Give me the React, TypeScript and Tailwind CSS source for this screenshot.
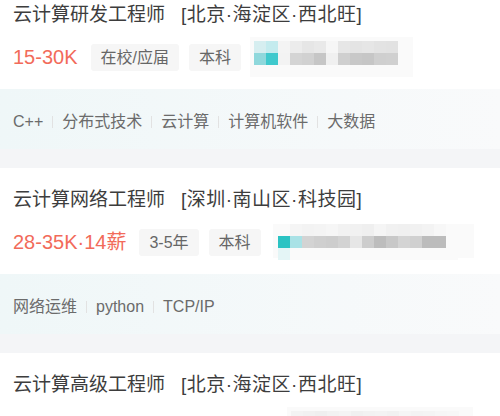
const FONT = "font-['Liberation_Sans','Noto_Sans_CJK_SC',sans-serif]";

interface Job {
  title: string;
  location: string;
  salary?: string;
  tags: string[];
  skills: string[];
  mosaic: string[][];
  mosaicClass: string;
}

const JOBS: Job[] = [
  {
    title: "云计算研发工程师",
    location: "[北京·海淀区·西北旺]",
    salary: "15-30K",
    tags: ["在校/应届", "本科"],
    skills: ["C++", "分布式技术", "云计算", "计算机软件", "大数据"],
    mosaicClass: "ml-[-1px] w-[163px] h-[40px] pt-[4px] pl-[4px]",
    mosaic: [
      ["#d6eef0", "#c4ebee", "#f4f4f4", "#ececec", "#e6e6e6", "#e9e9e9", "#f6f6f6", "#e6e6e6", "#e4e4e4", "#e6e6e6", "#e3e3e3", "#e2e2e2"],
      ["#8fd8dc", "#3fc9cd", "#f3f3f3", "#d4d4d4", "#d1d1d1", "#c6c6c6", "#f0f0f0", "#cfcfcf", "#c8c8c8", "#c6c6c6", "#cfcfcf", "#d0d0d0"],
    ],
  },
  {
    title: "云计算网络工程师",
    location: "[深圳·南山区·科技园]",
    salary: "28-35K·14薪",
    tags: ["3-5年", "本科"],
    skills: ["网络运维", "python", "TCP/IP"],
    mosaicClass: "ml-[2px] w-[201px] h-[34px] -mt-[3px] pl-[5px]",
    mosaic: [
      ["#fafafa", "#f5f5f5", "#f3f3f3", "#f4f4f4", "#f6f6f6", "#f2f2f2", "#f1f1f1", "#efefef", "#f5f5f5", "#f1f1f1", "#f0f0f0", "#f1f1f1", "#f3f3f3", "#f7f7f7", "#fafafa"],
      ["#2bc3c3", "#a9e2e6", "#d3d3d3", "#cfcfcf", "#cdcdcd", "#d3d3d3", "#e6e6e6", "#cdcdcd", "#bdbdbd", "#c8c8c8", "#d4d4d4", "#d0d0d0", "#bcbcbc", "#bcbcbc", "#fafafa"],
      ["#e4f5f6", "#fafafa", "#fafafa", "#fafafa", "#fafafa", "#fafafa", "#fafafa", "#fafafa", "#fafafa", "#fafafa", "#fafafa", "#fafafa", "#fafafa", "#fafafa", "#fafafa"],
    ],
  },
  {
    title: "云计算高级工程师",
    location: "[北京·海淀区·西北旺]",
    tags: [],
    skills: [],
    mosaicClass: "ml-[274px] w-[186px] h-[40px] pt-[4px] pl-[4px]",
    mosaic: [
      ["#f3f3f3", "#f1f1f1", "#efefef", "#f2f2f2", "#f4f4f4", "#f0f0f0", "#f2f2f2", "#f3f3f3", "#f1f1f1", "#f5f5f5", "#f3f3f3", "#f4f4f4", "#f6f6f6", "#f7f7f7"],
    ],
  },
];

function Mosaic({ rows, className }: { rows: string[][]; className: string }) {
  return (
    <div className={`bg-[#fafafa] shrink-0 flex flex-col ${className}`}>
      {rows.map((row, i) => (
        <div key={i} className="flex">
          {row.map((c, j) => (
            <div key={j} className="w-[12px] h-[12px]" style={{ backgroundColor: c }} />
          ))}
        </div>
      ))}
    </div>
  );
}

function JobCard({ job }: { job: Job }) {
  return (
    <div>
      <div className="bg-white px-[13px] pt-[19px] pb-[18px]">
        <div className="flex items-center h-[26px] text-[19px] leading-[26px] text-[#3d3d3d] whitespace-nowrap">
          <span>{job.title}</span>
          <span className="ml-[16px] tracking-[0.5px]">{job.location}</span>
        </div>
        <div className="flex items-center h-[28px] mt-[15px] whitespace-nowrap">
          {job.salary && <span className="text-[20px] text-[#f26b5a] mr-[13px]">{job.salary}</span>}
          {job.tags.map((t) => (
            <span
              key={t}
              className="h-[27px] leading-[27px] px-[10px] bg-[#f6f6f6] text-[16px] text-[#666] rounded-[3px] mr-[10px]"
            >
              {t}
            </span>
          ))}
          <Mosaic rows={job.mosaic} className={job.mosaicClass} />
        </div>
      </div>
      <div className="h-[60px] px-[13px] pt-[5px] flex items-center bg-gradient-to-r from-[#eff7f8] to-[#f9fafb] text-[16px] text-[#6b6b6b] whitespace-nowrap">
        {job.skills.map((s, i) => (
          <span key={s} className="flex items-center">
            {i > 0 && <span className="w-px h-[12px] bg-[#e2e2e2] mx-[9px]" />}
            {s}
          </span>
        ))}
      </div>
      <div className="h-[19px] bg-[#f4f5f7]" />
    </div>
  );
}

export default function App() {
  return (
    <div className={`${FONT} w-[500px] h-[416px] overflow-hidden bg-white`}>
      <div className="-mt-[17px]">
        {JOBS.map((job) => (
          <JobCard key={job.title} job={job} />
        ))}
      </div>
    </div>
  );
}
